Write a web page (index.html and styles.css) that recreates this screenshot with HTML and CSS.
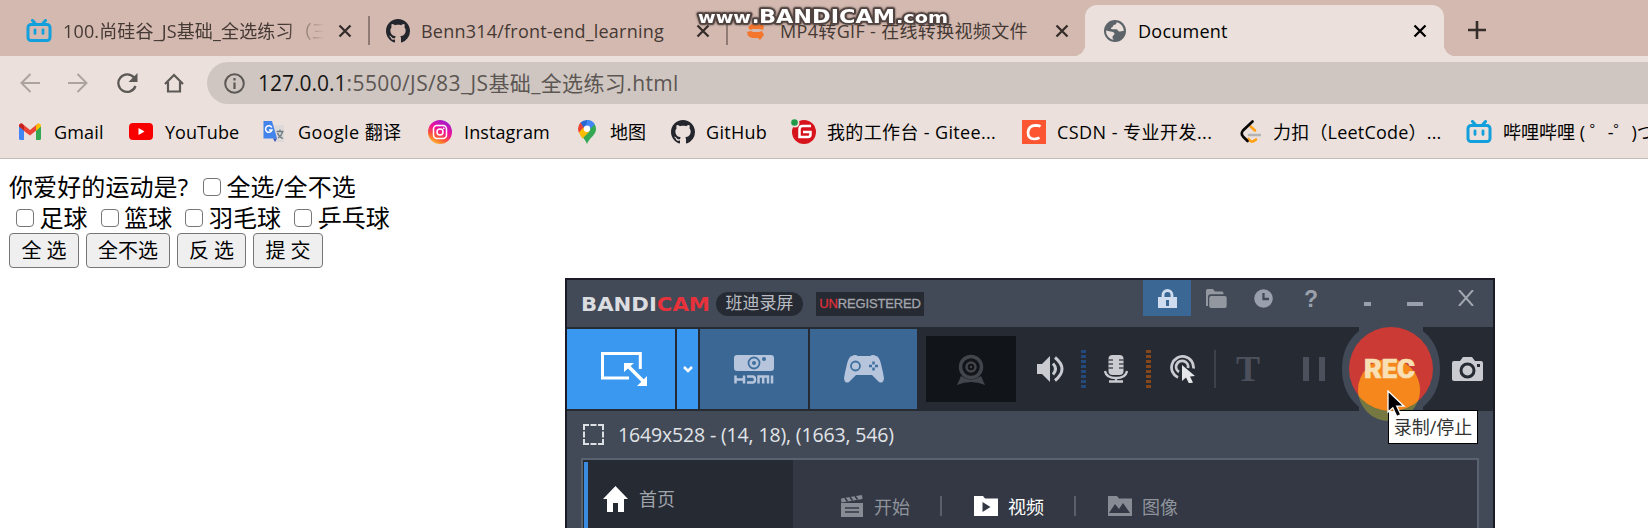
FILE: index.html
```html
<!DOCTYPE html>
<html lang="zh-CN">
<head>
<meta charset="utf-8">
<title>Document</title>
<link rel="stylesheet" href="styles.css">
</head>
<body>
<svg class="defs" width="0" height="0">
  <symbol id="bili" viewBox="0 0 26 24"><path d="M6.5 1.5l3.500 4M19.500 1.500l-3.500 4" stroke="#12a0dc" stroke-width="3" stroke-linecap="round"/><rect x="2" y="5.500" width="22" height="16" rx="3" fill="none" stroke="#12a0dc" stroke-width="3"/><path d="M9 10.800v3.600M17 10.800v3.600" stroke="#12a0dc" stroke-width="2.800" stroke-linecap="round"/></symbol>
  <symbol id="github" viewBox="0 0 16 16"><path fill="#24262d" d="M8 0C3.580 0 0 3.580 0 8c0 3.540 2.290 6.530 5.470 7.590.4.070.55-.17.55-.38 0-.19-.01-.82-.01-1.490-2.010.37-2.530-.49-2.690-.94-.09-.23-.48-.94-.82-1.130-.28-.15-.68-.52-.01-.53.63-.01 1.080.58 1.230.82.72 1.210 1.870.87 2.330.66.07-.52.28-.87.51-1.070-1.780-.2-3.640-.89-3.640-3.950 0-.87.31-1.590.82-2.150-.08-.2-.36-1.020.08-2.120 0 0 .67-.21 2.200.82.64-.18 1.320-.27 2-.27s1.360.09 2 .27c1.530-1.040 2.200-.82 2.200-.82.44 1.100.16 1.920.08 2.120.51.56.82 1.270.82 2.150 0 3.070-1.870 3.750-3.650 3.950.29.25.54.73.54 1.480 0 1.070-.01 1.930-.01 2.200 0 .21.15.46.55.38A8.010 8.010 0 0 0 16 8c0-4.420-3.580-8-8-8z"/></symbol>
  <symbol id="close" viewBox="0 0 14 14"><path d="M1.500 1.500l11 11M12.500 1.500l-11 11" stroke="currentColor" stroke-width="2.300"/></symbol>
  <linearGradient id="insta" x1="0.2" y1="1" x2="0.7" y2="0"><stop offset="0" stop-color="#ffc72c"/><stop offset=".3" stop-color="#fd5a36"/><stop offset=".6" stop-color="#f0109a"/><stop offset="1" stop-color="#9a20d0"/></linearGradient>
</svg>

<header class="browser">
  <div class="tabs">
    <div class="tab tab-1"><svg class="fav" width="26" height="24"><use href="#bili"/></svg><span class="title fade">100.尚硅谷_JS基础_全选练习（三</span><svg class="x" width="14" height="14"><use href="#close"/></svg></div>
    <div class="tab tab-2"><svg class="fav" width="24" height="24"><use href="#github"/></svg><span class="title">Benn314/front-end_learning</span><svg class="x" width="14" height="14"><use href="#close"/></svg></div>
    <div class="tab tab-3"><svg class="fav" width="20" height="20" viewBox="0 0 20 20"><path d="M2 6l5-4 1 2 7-1 3 2-1 4-3-1H7L4 9zM18 14l-4 5-2-2H6l-4-2-1-4 4-1 2 1h6l3-1z" fill="#f4762c"/></svg><span class="title">MP4转GIF - 在线转换视频文件</span><svg class="x" width="14" height="14"><use href="#close"/></svg></div>
    <div class="tab active"><svg class="fav" width="22" height="22" viewBox="0 0 22 22"><circle cx="11" cy="11" r="11" fill="#5c6469"/><path d="M13 2.200c-1 1-.5 2.400-2.500 2.500-2 .2-1 2.300-2.800 2.800-1.500.5-.8 1.800.5 1.800h4c1.700 0 1.500 2.200 3 2.200 1.200 0 2.700-.5 4.600-.5A9 9 0 0 0 13 2.200zM2 10.500l4.500 1c2.500.4 4 1 4 2.400-.2 1.500-2 1.200-2 3 0 1.500.8 2.600 1.500 3.100a9 9 0 0 1-8-9.500z" fill="#ebe0db"/></svg><span class="title">Document</span><svg class="x" width="14" height="14"><use href="#close"/></svg></div>
    <svg class="plus" width="18" height="18" viewBox="0 0 18 18"><path d="M9 0v18M0 9h18" stroke="#342d2a" stroke-width="2.600"/></svg>
  </div>
  <div class="nav">
    <svg width="20" height="20" viewBox="0 0 20 20" fill="none" stroke="#aca3a0" stroke-width="2"><path d="M20 10H2M10.500 1L1.500 10l9 9"/></svg>
    <svg width="20" height="20" viewBox="0 0 20 20" fill="none" stroke="#aca3a0" stroke-width="2"><path d="M0 10h18M9.500 1l9 9-9 9"/></svg>
    <svg width="22" height="22" viewBox="0 0 22 22"><path d="M18 5.500A8.800 8.800 0 1 0 19.500 14" fill="none" stroke="#5c5856" stroke-width="2.300"/><path d="M21.500 1v9h-9z" fill="#5c5856"/></svg>
    <svg width="20" height="20" viewBox="0 0 20 20" fill="none" stroke="#5c5856" stroke-width="2.200"><path d="M1 11L10 2l9 9M4 9v9.500h12V9"/></svg>
    <div class="omnibox"><svg width="21" height="21" viewBox="0 0 21 21"><circle cx="10.500" cy="10.500" r="9.300" fill="none" stroke="#5c5856" stroke-width="2"/><path d="M10.500 9.500V16M10.500 5v2.400" stroke="#5c5856" stroke-width="2.200"/></svg><span class="url"><b>127.0.0.1</b>:5500/JS/83_JS基础_全选练习.html</span></div>
  </div>
  <nav class="marks">
    <a class="m gmail"><svg width="22" height="17" viewBox="0 0 22 17"><path d="M0 3v12.500A1.500 1.500 0 0 0 1.500 17H5V6z" fill="#4285f4"/><path d="M22 3v12.500a1.500 1.500 0 0 1-1.500 1.500H17V6z" fill="#34a853"/><path d="M0 3.500Q0 0 3 .5L11 7l8-6.500v5.500L11 12.500 5 8v-.5z" fill="#ea4335"/><path d="M0 3.500Q0 0 3 .5l2 2V7.500z" fill="#c5221f"/><path d="M17 2.500L19 .5q3-.5 3 3L17 8z" fill="#fbbc04"/></svg><span>Gmail</span></a>
    <a class="m yt"><svg width="24" height="17" viewBox="0 0 24 17"><rect width="24" height="17" rx="4" fill="#f80000"/><path d="M9.500 5v7l6-3.500z" fill="#fff"/></svg><span>YouTube</span></a>
    <a class="m trans"><svg width="24" height="24" viewBox="0 0 24 24"><path d="M10 5h12v17H14z" fill="#ddd9d8"/><path d="M1.500 1H10l5 17.500H1.500z" fill="#4384ec"/><path d="M11 18.500h4L13 22z" fill="#3a4fbe"/><path d="M9.800 7.500A3.300 3.300 0 1 0 10 10H7" fill="none" stroke="#fff" stroke-width="1.500"/><path d="M14.500 11.500h7M18 9.500v2M20.500 12q-1 4-4.500 6M15.500 13q1.500 4 5.500 5.500" fill="none" stroke="#707b83" stroke-width="1.300"/></svg><span>Google 翻译</span></a>
    <a class="m ins"><svg width="24" height="24" viewBox="0 0 24 24"><circle cx="12" cy="12" r="12" fill="url(#insta)"/><rect x="5.500" y="5.500" width="13" height="13" rx="3.500" fill="none" stroke="#fff" stroke-width="1.500"/><circle cx="12" cy="12" r="3" fill="none" stroke="#fff" stroke-width="1.500"/><circle cx="15.700" cy="8.300" r=".9" fill="#fff"/></svg><span>Instagram</span></a>
    <a class="m map"><svg width="18" height="24" viewBox="0 0 18 24"><path d="M9 0a9 9 0 0 1 9 9c0 6-6 8-9 15-1.500-4-4-6.500-6-9z" fill="#34a853"/><path d="M9 0q5.500 0 7.800 4.300L9 12 4 3z" fill="#4285f4"/><path d="M2.500 2.500L7 6.500 1 13Q-1.500 7 2.500 2.500z" fill="#ea4335"/><path d="M1 12.500L6 7l5 5-6.500 6.500Q2 15.500 1 12.500z" fill="#fbbc04"/><path d="M2.500 2.500Q5 0 9 0l-.5 5L6 8z" fill="#2a68d2"/><circle cx="9" cy="8.700" r="3.200" fill="#fff"/></svg><span>地图</span></a>
    <a class="m gh"><svg width="24" height="24"><use href="#github"/></svg><span>GitHub</span></a>
    <a class="m gitee"><svg width="25" height="25" viewBox="0 0 25 25"><circle cx="13" cy="13" r="12" fill="#d7141c"/><path d="M20 7h-8.500Q8.500 7 8.500 10v8h8.500q2.500 0 2.500-2.500V13H12" fill="none" stroke="#fff" stroke-width="2.500"/><circle cx="4" cy="4" r="4.500" fill="#ebe0db"/><circle cx="3.500" cy="3.500" r="3.300" fill="#219a48"/></svg><span>我的工作台 - Gitee...</span></a>
    <a class="m csdn"><svg width="24" height="24" viewBox="0 0 24 24"><path d="M0 0h24v24H0z" fill="#fc5531"/><path d="M18.500 6.500Q17 5.300 13.500 5.300 6.500 5.500 6 12.500 6 19 12 19q3.500 0 5.500-1.300" fill="none" stroke="#fff" stroke-width="2.700"/></svg><span>CSDN - 专业开发...</span></a>
    <a class="m leet"><svg width="21" height="24" viewBox="0 0 21 24" fill="none" stroke-width="2.600" stroke-linecap="round"><path d="M8.500 18.800Q11 24 16 19.500M10.500 6.500l4.500 4" stroke="#ffa116"/><path d="M9 15h11" stroke="#b3b3b3"/><path d="M12.500 1.500L3 10.500q-2.500 3 0 6l4.500 4.500" stroke="#070706"/></svg><span>力扣（LeetCode）...</span></a>
    <a class="m bl"><svg width="26" height="24"><use href="#bili"/></svg><span>哔哩哔哩 ( ゜-゜)つロ</span></a>
  </nav>
  <svg class="watermark" width="256" height="24" viewBox="0 0 256 24"><g fill="#fff" stroke="#50433f" stroke-width="3.500" paint-order="stroke" stroke-linejoin="round"><text x="2" y="18.500" font-size="16" textLength="53" lengthAdjust="spacingAndGlyphs">www</text><text x="56" y="18.500" font-size="19">.</text><text x="63" y="18.500" font-size="20" textLength="136" lengthAdjust="spacingAndGlyphs">BANDICAM</text><text x="200" y="18.500" font-size="16" textLength="52" lengthAdjust="spacingAndGlyphs">.com</text></g></svg>
</header>

<main class="page">
  <div class="line first">你爱好的运动是? <i class="cb"></i>全选/全不选</div>
  <div class="line second"><i class="cb"></i>足球 <i class="cb"></i>篮球 <i class="cb"></i>羽毛球 <i class="cb"></i>乒乓球</div>
  <div class="buttons"><button class="b1">全 选</button><button class="b2">全不选</button><button class="b3">反 选</button><button class="b4">提 交</button></div>
</main>

<section class="recorder">
  <div class="caption">
    <svg class="logo" width="130" height="20" viewBox="0 0 130 20"><text x="0" y="16.500" textLength="129" lengthAdjust="spacingAndGlyphs" fill="#dcdde0">BANDI<tspan fill="#e8323b">CAM</tspan></text></svg>
    <span class="pill">班迪录屏</span>
    <span class="unreg"><em>UN</em>REGISTERED</span>
    <span class="lock"><svg width="19" height="19" viewBox="0 0 19 19"><path d="M5 9V6a4.500 4.500 0 0 1 9 0v3" fill="none" stroke="#cfdcf0" stroke-width="2.800"/><path d="M0 8h19v11H0z" fill="#cfdcf0"/><path d="M9.500 11v6" stroke="#3b6795" stroke-width="3"/></svg></span>
    <svg class="c-folder" width="21" height="19" viewBox="0 0 21 19"><path d="M0 17V1.500Q0 0 1.500 0H7l2 2.500h7q1.500 0 1.500 2v.7H5Q2 5.200 2 8v9z" fill="#9397a0"/><rect x="3.200" y="7" width="17.500" height="12" rx="2" fill="#9397a0"/></svg>
    <svg class="c-clock" width="19" height="19" viewBox="0 0 19 19"><circle cx="9.500" cy="9.500" r="9.300" fill="#9aa0ab"/><path d="M9.500 4v6H15" fill="none" stroke="#424a57" stroke-width="2.300"/></svg>
    <span class="help">?</span>
    <i class="dot"></i><i class="min"></i>
    <svg class="c-x" width="16" height="16" viewBox="0 0 16 16"><path d="M1 0l14 16M15 0L1 16" stroke="#a2a7b0" stroke-width="2"/></svg>
  </div>
  <div class="tools">
    <div class="mode area"><svg width="46" height="34" viewBox="0 0 46 34"><path d="M28 26H1.500V1.500h37.800V17" fill="none" stroke="#fff" stroke-width="3"/><path d="M27 14l15 15" stroke="#fff" stroke-width="3.500"/><path d="M23 11h10l-10 9zM46 34H36l10-10z" fill="#fff"/></svg></div>
    <div class="mode drop"><svg width="10" height="7" viewBox="0 0 10 7"><path d="M1 1l4 4 4-4" fill="none" stroke="#fff" stroke-width="2.500"/></svg></div>
    <div class="mode hdmi"><svg width="40" height="29" viewBox="0 0 40 29"><rect width="40" height="16" rx="3" fill="#b7c5dc"/><circle cx="20" cy="8" r="5.500" fill="none" stroke="#40709f" stroke-width="1.800"/><circle cx="20" cy="8" r="2" fill="#40709f"/><circle cx="30" cy="4" r="2" fill="#40709f"/><path d="M1.500 20.500v8M10 20.500v8M1.500 24.500H10M13 21.600h5.500q2.500 0 2.500 3t-2.500 2.800H13M24.500 28.500v-7H34v7M29.200 21.500v7M38 20.500v8" fill="none" stroke="#b7c5dc" stroke-width="2.500"/></svg></div>
    <div class="mode game"><svg width="40" height="28" viewBox="0 0 40 28"><path d="M8 1q3-2 6 0h12q3-2 6 0 3 0 5 8t3 14q-.500 6-5 4l-7-7H12l-7 7q-4.500 2-5-4Q1 17 3 9t5-8z" fill="#b7c5dc"/><circle cx="11.500" cy="11" r="4.500" fill="none" stroke="#40709f" stroke-width="1.800"/><path d="M29.500 6.500v3m0 3v3M25 11h3m3 0h3" stroke="#40709f" stroke-width="2.500"/></svg></div>
    <div class="cam"><svg width="28" height="31" viewBox="0 0 28 31"><circle cx="14" cy="13" r="10.500" fill="none" stroke="#42454b" stroke-width="3.500"/><circle cx="14" cy="13" r="4.500" fill="none" stroke="#42454b" stroke-width="2.500"/><circle cx="14" cy="13" r="1.200" fill="#42454b"/><path d="M4 22q10 7 20 0l4 9q-14-6-28 0z" fill="#42454b"/></svg></div>
    <svg class="t-spk" width="28" height="28" viewBox="0 0 28 28"><path d="M0 9h5l8-8v26l-8-8H0z" fill="#c9cbd0"/><path d="M16 8.500q5 5.500 0 11M18 2.500q14 11.500 0 23" fill="none" stroke="#c9cbd0" stroke-width="3"/></svg>
    <i class="meter blue"></i>
    <svg class="t-mic" width="24" height="28" viewBox="0 0 24 28"><rect x="4.500" width="15" height="20" rx="4" fill="#c9cbd0"/><path d="M4 5h5M4 9h5M4 13h5M20 5h-5M20 9h-5M20 13h-5" stroke="#4a4e57" stroke-width="1.400"/><path d="M1 16q1 7 11 7t11-7M12 23v3M5 26.500h14" fill="none" stroke="#c9cbd0" stroke-width="2.300"/></svg>
    <i class="meter orange"></i>
    <svg class="t-click" width="26" height="28" viewBox="0 0 26 28"><path d="M8 22.500A11 11 0 1 1 23.500 13.500M9 17a6 6 0 1 1 9-4" fill="none" stroke="#c9cbd0" stroke-width="2.800"/><path d="M12 10l13 11-5 .5 3 6-4 1-3-6-4 3.500z" fill="#e5e6e9"/></svg>
    <i class="sep"></i>
    <span class="t-text">T</span>
    <svg class="t-pause" width="22" height="24" viewBox="0 0 22 24"><path d="M0 0h6v24H0zM16 0h6v24h-6z" fill="#4b505c"/></svg>
    <svg class="t-rec" width="98" height="84" viewBox="0 0 98 84"><path d="M17 0v4Q0 18 0 42t17 38v4h64v-4Q98 66 98 42T81 4V0z" fill="#424a57"/><circle cx="49" cy="42" r="42" fill="#cc3a35"/></svg>
    <svg class="t-shot" width="31" height="24" viewBox="0 0 31 24"><path d="M2 4h6l3-4h9l3 4h6q2 0 2 2v16q0 2-2 2H2q-2 0-2-2V6q0-2 2-2z" fill="#c9cbd0"/><circle cx="15.500" cy="13.500" r="6.500" fill="none" stroke="#262a33" stroke-width="3"/><path d="M25 7h3v3h-3z" fill="#262a33"/></svg>
  </div>
  <div class="size"><i class="dash"></i><span>1649x528 - (14, 18), (1663, 546)</span></div>
  <div class="panel">
    <div class="side"><svg width="25" height="26" viewBox="0 0 25 26"><path d="M12.500 0L25 13h-4v13h-6v-9h-5v9H4V13H0z" fill="#fff"/></svg><span>首页</span></div>
    <div class="sub">
      <svg width="24" height="22" viewBox="0 0 24 22"><path d="M1 3.500L22 0l.5 4L1.500 7.500z" fill="#868b94"/><path d="M5 3l2.500 3.500M10 2l2.500 3.500M15 1l2.500 3.500" stroke="#333844" stroke-width="1.500"/><path d="M1 8h22v14H1z" fill="#868b94"/><path d="M5 13h14M5 17h14" stroke="#333844" stroke-width="1.600"/></svg><span>开始</span><i></i>
      <svg width="24" height="20" viewBox="0 0 24 20"><path d="M0 0h9l2 2.500h13V20H0z" fill="#fff"/><path d="M8.500 6v10l8-5z" fill="#333844"/></svg><span class="on">视频</span><i></i>
      <svg width="24" height="20" viewBox="0 0 24 20"><path d="M0 0h9l2 2.500h13V20H0z" fill="#868b94"/><path d="M1 17l6-9 4 5 4-6 7 10z" fill="#333844"/></svg><span>图像</span>
    </div>
  </div>
</section>
<div class="tip">录制/停止</div>
<svg class="halo" width="62" height="84" viewBox="0 0 62 84">
  <clipPath id="disc"><circle cx="33" cy="32" r="42"/></clipPath>
  <clipPath id="clear"><path d="M0 0h62v73H30v11H0z"/></clipPath>
  <g clip-path="url(#clear)"><circle cx="31" cy="53" r="31" fill="#b4b428" fill-opacity=".45"/></g>
  <circle cx="31" cy="53" r="31" fill="#f5871c" clip-path="url(#disc)"/>
  <text x="6" y="41" textLength="51" lengthAdjust="spacingAndGlyphs">REC</text>
</svg>
<svg class="pointer" width="20" height="28" viewBox="0 0 20 28"><path d="M1 1v21l4.800-4.300 4 8.800 4-1.800-4-8.500H17z" fill="#000" stroke="#fff" stroke-width="1.300"/></svg>
</body>
</html>
```
FILE: styles.css
```css
* { box-sizing: border-box; }
html { overflow: hidden; }
body { margin: 0; width: 1648px; height: 528px; overflow: hidden; position: relative; background: #fff; font-family: "Open Sans", "Noto Sans CJK SC", sans-serif; color: #000; }
svg { display: block; flex: none; }
.defs { position: absolute; }
.browser { height: 159px; background: #ebe0db; border-bottom: 1px solid #c3bbb8; position: relative; overflow: hidden; }

.tabs { height: 56px; padding-top: 5px; background: #d4b9b0; display: flex; }
.tab { height: 51px; display: flex; align-items: center; flex: none; position: relative; font-size: 18px; color: #443934; white-space: nowrap; }
.title { flex: 1; min-width: 0; overflow: hidden; line-height: 30px; }
.x { color: #342d2a; }
.tab-1 { width: 370px; padding: 0 18px 0 26px; }
.tab-1 .title { margin: 0 11px; letter-spacing: .15px; }
.fade { -webkit-mask-image: linear-gradient(90deg, #000 84%, transparent 99%); mask-image: linear-gradient(90deg, #000 84%, transparent 99%); }
.tab-2 { width: 358px; padding: 0 18px 0 16px; }
.tab-2 .title { margin-left: 11px; letter-spacing: .22px; }
.tab-3 { width: 357px; padding: 0 16px 0 18px; }
.tab-3 .title { margin-left: 14px; letter-spacing: .33px; }
.tab-1, .tab-2 { background: linear-gradient(#8f7b74, #8f7b74) right 11px / 2px 29px no-repeat; }
.active { width: 359px; padding: 0 17px 0 19px; background: #ebe0db; border-radius: 12px 12px 0 0; color: #000; }
.active .title { margin-left: 12px; letter-spacing: .25px; }
.active .x { color: #000; }
.active::before, .active::after { content: ""; position: absolute; bottom: 0; width: 12px; height: 12px; }
.active::before { left: -12px; background: radial-gradient(circle at 0 0, transparent 12px, #ebe0db 12.5px); }
.active::after { right: -12px; background: radial-gradient(circle at 100% 0, transparent 12px, #ebe0db 12.5px); }
.plus { margin: 16px 0 0 24px; }

.nav { height: 48px; padding: 6px 0 0 20px; display: flex; align-items: center; }
.nav > svg { margin-right: 28px; }
.nav > svg:nth-child(3) { margin-right: 26px; }
.nav > svg:nth-child(4) { margin-right: 23px; }
.omnibox { flex: 1; height: 42px; border-radius: 21px 0 0 21px; background: #cfc6c1; display: flex; align-items: center; padding-left: 17px; }
.url { margin-left: 13px; font-size: 21px; line-height: 30px; color: #5c5653; letter-spacing: .38px; white-space: nowrap; }
.url b { font-weight: 400; color: #171514; letter-spacing: 0; }

.marks { height: 54px; display: flex; align-items: center; padding: 1px 0 0 19px; font-size: 18px; white-space: nowrap; }
.m { display: flex; align-items: center; flex: none; line-height: 30px; }
.gmail { width: 110px; } .gmail span { margin-left: 13px; letter-spacing: .15px; }
.yt { width: 133px; } .yt span { margin-left: 12px; }
.trans { width: 166px; } .trans span { margin-left: 12px; letter-spacing: .4px; }
.ins { width: 150px; } .ins span { margin-left: 12px; letter-spacing: .1px; }
.map { width: 93px; } .map span { margin-left: 14px; }
.gh { width: 120px; } .gh span { margin-left: 11px; letter-spacing: .3px; }
.gitee { width: 231px; } .gitee span { margin-left: 11px; letter-spacing: .35px; }
.csdn { width: 218px; } .csdn span { margin-left: 11px; letter-spacing: .45px; }
.leet { width: 226px; } .leet span { margin-left: 12px; letter-spacing: .2px; }
.bl span { margin-left: 11px; }
.watermark { position: absolute; left: 696px; top: 4px; font-family: "DejaVu Sans", sans-serif; font-weight: 700; filter: drop-shadow(0 0 1px #50433f); }

.page { height: 119px; padding: 12px 0 0 9px; }
.line { height: 31px; display: flex; align-items: center; font-size: 24px; line-height: 31px; white-space: pre; }
.cb { width: 18px; height: 18px; border: 1.5px solid #767676; border-radius: 4px; background: #fff; margin: 0 5.500px 0 7px; }
.first .cb { margin: 0 6px 0 8px; }
.first { letter-spacing: .1px; }
.buttons { display: flex; gap: 7px; }
.buttons button { height: 35px; padding: 0; border: 1.5px solid #767676; border-radius: 4px; background: #efefef; color: #000; font: 20px/31px "Open Sans", "Noto Sans CJK SC", sans-serif; white-space: nowrap; }
.b1, .b4 { width: 70px; }
.b3 { width: 69px; }
.b2 { width: 84px; }

.recorder { width: 930px; height: 250px; margin-left: 565px; border: 2px solid #1b1b27; border-bottom: 0; background: #424a57; overflow: hidden; }
.caption { height: 47px; display: flex; align-items: flex-start; padding-left: 14px; }
.logo { margin-top: 14px; font: 700 19.500px "DejaVu Sans", sans-serif; overflow: visible; }
.pill { width: 87px; height: 24px; margin: 12px 0 0 5px; border-radius: 12px; background: #262a33; color: #b9bcc2; font-size: 17px; line-height: 22px; text-align: center; }
.unreg { width: 108px; height: 24px; margin: 12px 0 0 13px; background: #262a33; color: #a3a6ad; font: 400 13px/24px "Liberation Sans", sans-serif; letter-spacing: -.15px; text-align: center; -webkit-text-stroke: .3px; }
.unreg em { font-style: normal; color: #df3038; }
.lock { width: 48px; height: 36px; margin-left: 219px; background: #3b6795; padding: 9px 0 0 15px; }
.c-folder { margin: 9px 0 0 15px; }
.c-clock { margin: 9px 0 0 27px; }
.help { width: 15px; margin: 7px 0 0 31px; font: 700 23px/24px "Liberation Sans", sans-serif; color: #9aa0ab; }
.dot { width: 7px; height: 4px; margin: 22px 0 0 45px; background: #9aa0ab; }
.min { width: 16px; height: 4px; margin: 22px 0 0 36px; background: #9aa0ab; }
.c-x { margin: 10px 0 0 35px; }

.tools { height: 84px; background: #262a33; display: flex; align-items: center; }
.mode { height: 80px; margin-right: 2px; display: flex; align-items: center; justify-content: center; background: #3b6795; }
.area { width: 108px; background: #3b98f0; } .area svg { margin-left: 6px; }
.drop { width: 21px; background: #3b98f0; }
.hdmi { width: 108px; }
.game { width: 107px; }
.cam { width: 90px; height: 66px; margin-left: 7px; background: #111418; display: flex; align-items: center; justify-content: center; }
.t-spk { margin-left: 21px; }
.meter { width: 5px; height: 39px; margin-left: 16px; }
.blue { background: repeating-linear-gradient(#244a7c 0 3px, #262a33 3px 5px); }
.orange { background: repeating-linear-gradient(#854719 0 3px, #262a33 3px 5px); margin-left: 18px; }
.t-mic { margin-left: 18px; }
.t-click { margin-left: 19px; }
.sep { width: 2px; height: 38px; margin-left: 18px; background: #3c414c; }
.t-text { width: 25px; margin-left: 20px; font: 700 36px/38px "Liberation Serif", serif; color: #4b505c; }
.t-pause { margin-left: 42px; }
.t-rec { margin-left: 17px; }
.t-shot { margin-left: 12px; }

.size { height: 47px; display: flex; align-items: center; padding-left: 16px; color: #e1e4e8; font-size: 19.500px; white-space: nowrap; }
.size span { margin-left: 14px; letter-spacing: -.15px; }
.dash { width: 21px; height: 21px; border: 2px dashed #dcdfe3; }
.panel { height: 80px; margin: 0 14px; border: 2px solid #59636f; border-bottom: 0; display: flex; background: #333844; font-size: 18px; color: #8f939b; }
.side { width: 210px; background: linear-gradient(#3b8be0, #3b8be0) 1px 2px / 4px 100% no-repeat #262a33; display: flex; align-items: center; padding: 0 0 2px 20px; }
.side svg { margin-top: 2px; }
.side span { margin-left: 11px; color: #a0a4ab; }
.sub { display: flex; align-items: center; padding: 14px 0 0 47px; }
.sub span { width: 36px; margin-left: 10px; white-space: nowrap; }
.sub i { width: 2px; height: 20px; margin: 0 32px 0 30px; background: #59606b; }
.sub .on { color: #fff; }

.tip { position: absolute; left: 1388px; top: 410px; width: 90px; height: 34px; border: 1px solid #000; background: #fff; color: #333; font-size: 18px; line-height: 33px; text-align: center; white-space: nowrap; }
.halo { position: absolute; left: 1358px; top: 337px; font: 900 25px "Roboto", sans-serif; }
.halo text { fill: #f8e0b4; stroke: #f8e0b4; stroke-width: .6; }
.pointer { position: absolute; left: 1387px; top: 390px; }
```
